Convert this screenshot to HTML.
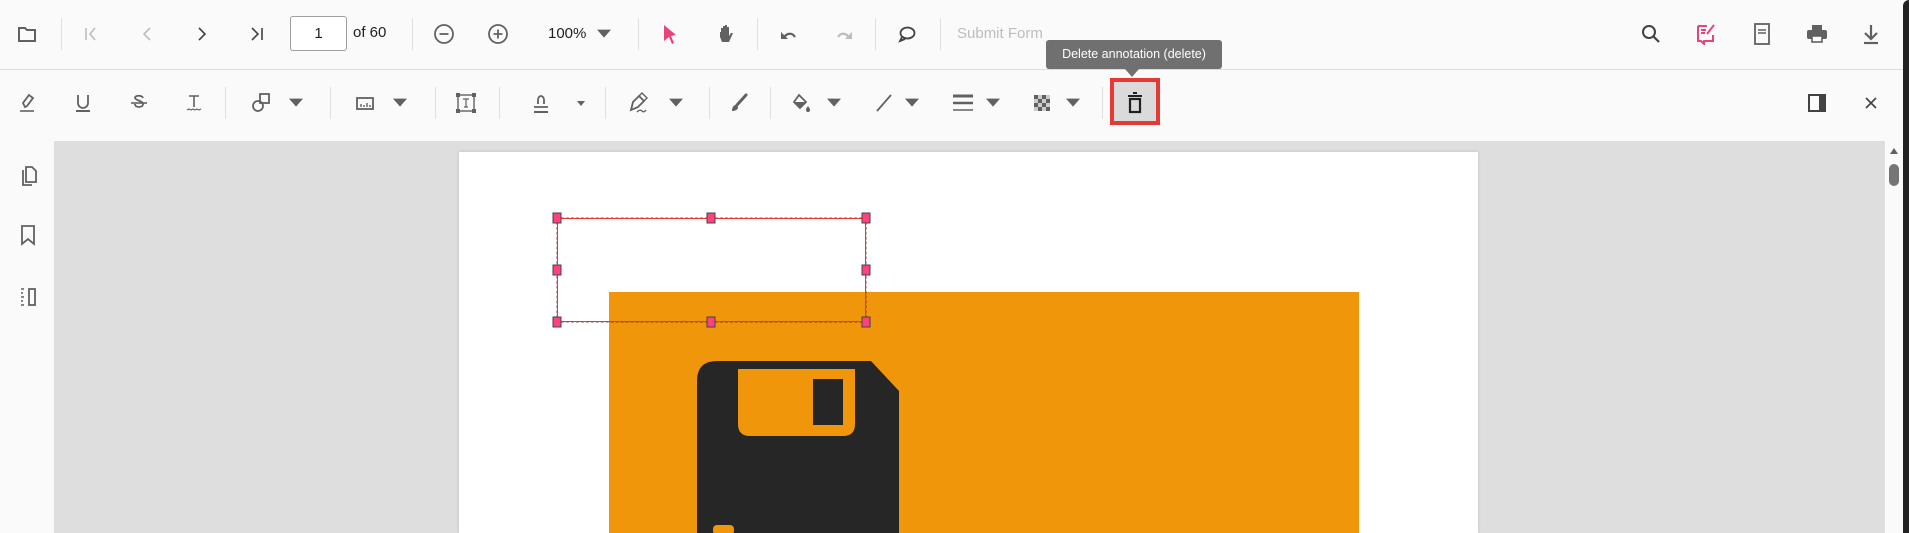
<!DOCTYPE html>
<html><head><meta charset="utf-8"><style>
*{margin:0;padding:0;box-sizing:border-box}
body{width:1909px;height:533px;overflow:hidden;background:#fafafa;font-family:"Liberation Sans",sans-serif;position:relative}
.a{position:absolute}
.sep{position:absolute;width:1px;background:#e0e0e0}
.ic{position:absolute;transform:translate(-50%,-50%)}
.dd{position:absolute;width:0;height:0;border-left:7px solid transparent;border-right:7px solid transparent;border-top:8px solid #616161;transform:translate(-50%,-30%)}
.h{position:absolute;width:9px;height:11px;background:#ff4081;border:1px solid #444;transform:translate(-50%,-50%)}
</style></head><body>
<!-- toolbar 1 -->
<div class="a" style="left:0;top:0;width:1909px;height:70px;background:#fafafa;border-bottom:1px solid #dcdcdc"></div>
<div class="a" style="left:0;top:71px;width:1909px;height:70px;background:#fafafa"></div>
<div class="a" style="left:1903px;top:0;width:6px;height:533px;background:#222;border-top-left-radius:8px"></div>

<svg class="ic" style="left:27px;top:34px" width="20" height="20" viewBox="0 0 20 20"><path d="M2 4h6l2 2h8v11H2z" fill="none" stroke="#616161" stroke-width="2"/></svg>
<div class="sep" style="left:61px;top:18px;height:32px"></div>
<svg class="ic" style="left:91px;top:34px" width="20" height="20" viewBox="0 0 20 20"><path d="M5 4v12M14 4l-5 6 5 6" fill="none" stroke="#bdbdbd" stroke-width="1.6"/></svg>
<svg class="ic" style="left:147px;top:34px" width="20" height="20" viewBox="0 0 20 20"><path d="M13 4l-6 6 6 6" fill="none" stroke="#bdbdbd" stroke-width="1.6"/></svg>
<svg class="ic" style="left:202px;top:34px" width="20" height="20" viewBox="0 0 20 20"><path d="M7 4l6 6-6 6" fill="none" stroke="#424242" stroke-width="1.6"/></svg>
<svg class="ic" style="left:257px;top:34px" width="20" height="20" viewBox="0 0 20 20"><path d="M5 4l6 6-6 6M15 4v12" fill="none" stroke="#424242" stroke-width="1.6"/></svg>
<div class="a" style="left:290px;top:16px;width:57px;height:35px;border:1px solid #9e9e9e;border-radius:3px;font-size:15px;text-align:center;line-height:33px;color:#212121;background:#fff">1</div>
<div class="a" style="left:353px;top:24px;font-size:15px;color:#212121">of 60</div>
<div class="sep" style="left:412px;top:18px;height:32px"></div>
<svg class="ic" style="left:444px;top:34px" width="22" height="22" viewBox="0 0 22 22"><circle cx="11" cy="11" r="9" fill="none" stroke="#616161" stroke-width="1.8"/><path d="M6.5 11h9" stroke="#616161" stroke-width="1.8"/></svg>
<svg class="ic" style="left:498px;top:34px" width="22" height="22" viewBox="0 0 22 22"><circle cx="11" cy="11" r="9" fill="none" stroke="#616161" stroke-width="1.8"/><path d="M6.5 11h9M11 6.5v9" stroke="#616161" stroke-width="1.8"/></svg>
<div class="a" style="left:548px;top:25px;font-size:15px;color:#212121">100%</div>
<div class="dd" style="left:604px;top:32px"></div>
<div class="sep" style="left:638px;top:18px;height:32px"></div>
<svg class="ic" style="left:670px;top:34px" width="20" height="22" viewBox="0 0 20 22"><path d="M4 2l12 10-5 1 3 7-2 1-3-7-5 4z" fill="#e8437a"/></svg>
<svg class="ic" style="left:726px;top:34px" width="20" height="22" viewBox="0 0 20 22"><path d="M5 10V5h2v6V3h2v8V2h2v9V4h2v9l2-3h2l-4 9H6l-2-5V9h1z" fill="#616161"/></svg>
<div class="sep" style="left:757px;top:18px;height:32px"></div>
<svg class="ic" style="left:789px;top:35px" width="20" height="20" viewBox="0 0 20 20"><path d="M5 14c1-6 8-7 11-2" fill="none" stroke="#616161" stroke-width="2.2"/><path d="M2 7v7h7z" fill="#616161"/></svg>
<svg class="ic" style="left:844px;top:35px" width="20" height="20" viewBox="0 0 20 20"><path d="M15 14c-1-6-8-7-11-2" fill="none" stroke="#bdbdbd" stroke-width="2.2"/><path d="M18 7v7h-7z" fill="#bdbdbd"/></svg>
<div class="sep" style="left:875px;top:18px;height:32px"></div>
<svg class="ic" style="left:907px;top:34px" width="20" height="20" viewBox="0 0 20 20"><ellipse cx="10.5" cy="9" rx="7" ry="5.5" fill="none" stroke="#424242" stroke-width="1.8"/><path d="M5 13l-2 4 5-2" fill="none" stroke="#424242" stroke-width="1.8"/></svg>
<div class="sep" style="left:940px;top:18px;height:32px"></div>
<div class="a" style="left:957px;top:25px;font-size:15px;color:#bdbdbd">Submit Form</div>

<svg class="ic" style="left:1651px;top:34px" width="22" height="22" viewBox="0 0 22 22"><circle cx="9" cy="9" r="6" fill="none" stroke="#424242" stroke-width="2"/><path d="M13 13l6 6" stroke="#424242" stroke-width="2.2"/></svg>
<svg class="ic" style="left:1706px;top:34px" width="22" height="22" viewBox="0 0 22 22"><path d="M3 3h9M3 3v15h3l3 3v-3h9v-6" fill="none" stroke="#e8437a" stroke-width="2"/><path d="M6 7h5M6 10h4M19 2l-7 9" stroke="#e8437a" stroke-width="2"/></svg>
<svg class="ic" style="left:1762px;top:34px" width="18" height="22" viewBox="0 0 18 22"><rect x="2" y="1" width="14" height="20" fill="none" stroke="#616161" stroke-width="1.8"/><path d="M5 7h8M5 10h8" stroke="#616161" stroke-width="1.6"/></svg>
<svg class="ic" style="left:1817px;top:34px" width="22" height="20" viewBox="0 0 22 20"><rect x="6" y="1" width="10" height="5" fill="#616161"/><rect x="1" y="6" width="20" height="9" rx="2" fill="#616161"/><rect x="6" y="12" width="10" height="6" fill="#fff" stroke="#616161" stroke-width="1.6"/></svg>
<svg class="ic" style="left:1871px;top:34px" width="20" height="22" viewBox="0 0 20 22"><path d="M10 2v13M4 10l6 6 6-6" fill="none" stroke="#616161" stroke-width="2.2"/><path d="M3 20h14" stroke="#616161" stroke-width="2.2"/></svg>

<!-- tooltip -->
<div class="a" style="left:1046px;top:40px;width:176px;height:29px;background:#707070;border-radius:3px;color:#fff;font-size:12.5px;line-height:29px;text-align:center">Delete annotation (delete)</div>
<div class="a" style="left:1125px;top:69px;width:0;height:0;border-left:7px solid transparent;border-right:7px solid transparent;border-top:8px solid #707070"></div>

<!-- toolbar 2 -->
<svg class="ic" style="left:27px;top:103px" width="20" height="20" viewBox="0 0 20 20"><path d="M8 14l-2-4 6-8 4 3-6 8z" fill="none" stroke="#616161" stroke-width="1.8"/><path d="M3 18h14" stroke="#616161" stroke-width="1.6"/></svg>
<svg class="ic" style="left:83px;top:103px" width="20" height="20" viewBox="0 0 20 20"><path d="M5 2v8a5 5 0 0 0 10 0V2" fill="none" stroke="#616161" stroke-width="1.8"/><path d="M3 18h14" stroke="#616161" stroke-width="2"/></svg>
<svg class="ic" style="left:139px;top:103px" width="20" height="20" viewBox="0 0 20 20"><path d="M14 5c-1-3-8-3-8 0 0 2 8 3 8 6 0 4-8 4-8 0" fill="none" stroke="#616161" stroke-width="1.8"/><path d="M2 10h16" stroke="#616161" stroke-width="1.6"/></svg>
<svg class="ic" style="left:194px;top:103px" width="20" height="20" viewBox="0 0 20 20"><path d="M5 3h10M10 3v11" stroke="#616161" stroke-width="1.6"/><path d="M3 17l2-1 2 1 2-1 2 1 2-1 2 1 2-1" fill="none" stroke="#616161" stroke-width="1.2"/></svg>
<div class="sep" style="left:225px;top:87px;height:32px"></div>
<svg class="ic" style="left:262px;top:103px" width="22" height="22" viewBox="0 0 22 22"><circle cx="7" cy="14" r="5" fill="none" stroke="#616161" stroke-width="1.8"/><rect x="9" y="2" width="9" height="9" fill="none" stroke="#616161" stroke-width="1.8"/></svg>
<div class="dd" style="left:296px;top:101px"></div>
<div class="sep" style="left:330px;top:87px;height:32px"></div>
<svg class="ic" style="left:365px;top:103px" width="20" height="20" viewBox="0 0 20 20"><rect x="2" y="5" width="16" height="11" fill="none" stroke="#616161" stroke-width="1.8"/><path d="M6 14v-3M9 14v-2M12 14v-4M15 14v-2" stroke="#616161" stroke-width="1.4"/></svg>
<div class="dd" style="left:400px;top:101px"></div>
<div class="sep" style="left:435px;top:87px;height:32px"></div>
<svg class="ic" style="left:466px;top:103px" width="22" height="22" viewBox="0 0 22 22"><rect x="3" y="3" width="16" height="16" fill="none" stroke="#616161" stroke-width="1.4"/><rect x="1" y="1" width="4" height="4" fill="#616161"/><rect x="17" y="1" width="4" height="4" fill="#616161"/><rect x="1" y="17" width="4" height="4" fill="#616161"/><rect x="17" y="17" width="4" height="4" fill="#616161"/><path d="M8 7h6M11 7v8M9 15h4" stroke="#616161" stroke-width="1.2"/></svg>
<div class="sep" style="left:499px;top:87px;height:32px"></div>
<svg class="ic" style="left:541px;top:103px" width="20" height="22" viewBox="0 0 20 22"><path d="M7 12V8a3 4 0 1 1 6 0v4M3 15h14" fill="none" stroke="#616161" stroke-width="1.8"/><path d="M3 20h14" stroke="#616161" stroke-width="2"/></svg>
<div class="a" style="left:577px;top:101px;border-left:4px solid transparent;border-right:4px solid transparent;border-top:5px solid #616161"></div>
<div class="sep" style="left:605px;top:87px;height:32px"></div>
<svg class="ic" style="left:638px;top:103px" width="22" height="22" viewBox="0 0 22 22"><path d="M4 18l2-8 6-6 5 5-6 6z" fill="none" stroke="#616161" stroke-width="1.8"/><path d="M12 4l3-3 5 5-3 3M10 20q3-3 5-1t4-1" fill="none" stroke="#616161" stroke-width="1.4"/></svg>
<div class="dd" style="left:676px;top:101px"></div>
<div class="sep" style="left:709px;top:87px;height:32px"></div>
<svg class="ic" style="left:739px;top:103px" width="20" height="20" viewBox="0 0 20 20"><path d="M17 2l-9 10" stroke="#616161" stroke-width="3" stroke-linecap="round"/><path d="M7 12c-3 0-4 3-4 6 3 0 6-1 6-4z" fill="#616161"/></svg>
<div class="sep" style="left:770px;top:87px;height:32px"></div>
<svg class="ic" style="left:801px;top:103px" width="22" height="22" viewBox="0 0 22 22"><path d="M9 3l7 7-6 6-6-6z" fill="none" stroke="#616161" stroke-width="1.8"/><path d="M4 10h12l-6 6z" fill="#616161"/><path d="M18 14c-1.5 2-2 3-2 4a2 2 0 0 0 4 0c0-1-.5-2-2-4z" fill="#616161"/></svg>
<div class="dd" style="left:834px;top:101px"></div>
<svg class="ic" style="left:884px;top:103px" width="20" height="20" viewBox="0 0 20 20"><path d="M3 18L17 2" stroke="#616161" stroke-width="1.8"/></svg>
<div class="dd" style="left:912px;top:101px"></div>
<svg class="ic" style="left:963px;top:103px" width="22" height="22" viewBox="0 0 22 22"><path d="M1 4h20" stroke="#616161" stroke-width="3"/><path d="M1 11h20" stroke="#616161" stroke-width="2.5"/><path d="M1 18h20" stroke="#616161" stroke-width="1.6"/></svg>
<div class="dd" style="left:993px;top:101px"></div>
<svg class="ic" style="left:1042px;top:103px" width="20" height="20" viewBox="0 0 20 20"><g fill="#616161"><rect x="2" y="2" width="4" height="4"/><rect x="10" y="2" width="4" height="4"/><rect x="6" y="6" width="4" height="4"/><rect x="14" y="6" width="4" height="4"/><rect x="2" y="10" width="4" height="4"/><rect x="10" y="10" width="4" height="4"/><rect x="6" y="14" width="4" height="4"/><rect x="14" y="14" width="4" height="4"/></g><rect x="2" y="2" width="16" height="16" fill="#616161" opacity=".3"/></svg>
<div class="dd" style="left:1073px;top:101px"></div>
<div class="sep" style="left:1102px;top:87px;height:32px"></div>
<div class="a" style="left:1110px;top:78px;width:50px;height:47px;border:4px solid #e53935;background:#dadada"></div>
<svg class="ic" style="left:1135px;top:103px" width="20" height="22" viewBox="0 0 20 22"><path d="M3 4h14M8 1h4" stroke="#212121" stroke-width="2"/><rect x="5" y="7" width="10" height="13" fill="none" stroke="#212121" stroke-width="2.2"/></svg>
<svg class="ic" style="left:1817px;top:103px" width="20" height="20" viewBox="0 0 20 20"><rect x="2" y="2" width="16" height="16" fill="none" stroke="#424242" stroke-width="2"/><rect x="12" y="2" width="6" height="16" fill="#424242"/></svg>
<svg class="ic" style="left:1871px;top:103px" width="16" height="16" viewBox="0 0 16 16"><path d="M3 3l10 10M13 3L3 13" stroke="#424242" stroke-width="1.6"/></svg>

<!-- content -->
<div class="a" style="left:0;top:141px;width:1903px;height:392px;background:#dedede"></div>
<div class="a" style="left:0;top:141px;width:54px;height:392px;background:#fafafa"></div>
<svg class="ic" style="left:28px;top:176px" width="20" height="22" viewBox="0 0 20 22"><path d="M8 2h6l4 4v11H8z" fill="none" stroke="#616161" stroke-width="1.8"/><path d="M5 5v15h9" fill="none" stroke="#616161" stroke-width="1.8"/></svg>
<svg class="ic" style="left:28px;top:235px" width="18" height="22" viewBox="0 0 18 22"><path d="M3 2h12v18l-6-5-6 5z" fill="none" stroke="#616161" stroke-width="1.8"/></svg>
<svg class="ic" style="left:28px;top:297px" width="20" height="20" viewBox="0 0 20 20"><rect x="11" y="2" width="6" height="16" fill="none" stroke="#616161" stroke-width="1.8"/><path d="M3 2h3M3 6h2M3 10h3M3 14h2M3 18h3" stroke="#616161" stroke-width="1.4"/></svg>

<div class="a" style="left:1885px;top:141px;width:18px;height:392px;background:#fafafa"></div>
<div class="a" style="left:1890px;top:148px;border-left:4px solid transparent;border-right:4px solid transparent;border-bottom:6px solid #616161"></div>
<div class="a" style="left:1889px;top:164px;width:10px;height:22px;border-radius:5px;background:#757575"></div>

<div class="a" style="left:459px;top:152px;width:1019px;height:381px;background:#fff;box-shadow:0 0 3px rgba(0,0,0,.15)"></div>
<div class="a" style="left:609px;top:292px;width:750px;height:241px;background:#f0960a"></div>
<svg class="a" style="left:690px;top:355px" width="220" height="178" viewBox="690 355 220 178">
<path d="M717 361H871L899 391V533H697V381Q697 361 717 361Z" fill="#262626"/>
<path d="M738 369H855V424Q855 436 843 436H750Q738 436 738 424Z" fill="#f0960a"/>
<rect x="813" y="379" width="30" height="46" fill="#262626"/>
<rect x="713" y="525" width="21" height="10" rx="4" fill="#f0960a"/>
</svg>
<div class="a" style="left:557px;top:218px;width:309px;height:104px;border:1px solid #e53935;outline:1px dashed rgba(120,0,0,.35)"></div>
<div class="h" style="left:557px;top:218px"></div><div class="h" style="left:711px;top:218px"></div><div class="h" style="left:866px;top:218px"></div>
<div class="h" style="left:557px;top:270px"></div><div class="h" style="left:866px;top:270px"></div>
<div class="h" style="left:557px;top:322px"></div><div class="h" style="left:711px;top:322px"></div><div class="h" style="left:866px;top:322px"></div>
</body></html>
